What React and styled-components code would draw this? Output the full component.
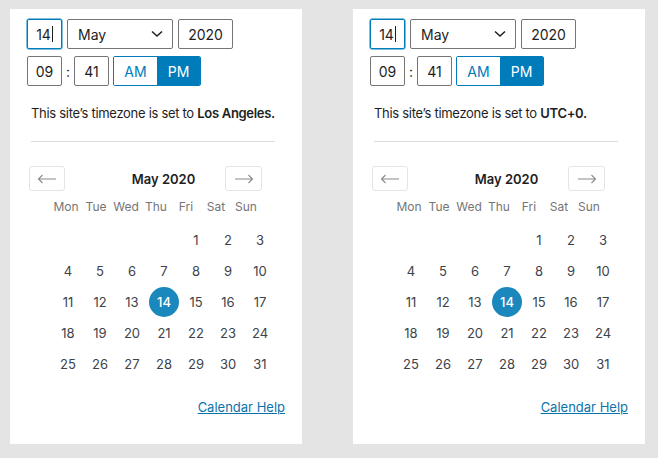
import React from "react";
import styled, { createGlobalStyle } from "styled-components";

const GlobalStyle = createGlobalStyle`
  html, body {
    margin: 0;
    padding: 0;
    background: #e4e4e4;
  }
  body {
    font-family: Inter, "Noto Sans", sans-serif;
    color: #1e1e1e;
    -webkit-font-smoothing: antialiased;
  }
`;

const Page = styled.div`
  display: flex;
  gap: 51px;
  padding: 9px 13px 0 10px;
  width: 658px;
  height: 458px;
  box-sizing: border-box;
`;

const Panel = styled.div`
  width: 292px;
  height: 435px;
  box-sizing: border-box;
  background: #fff;
  padding: 10px 17px 0 17px;
  display: flex;
  flex-direction: column;
`;

const Row = styled.div`
  display: flex;
  align-items: center;
  gap: ${(p) => p.$gap ?? 5}px;
  margin-bottom: ${(p) => p.$mb || 0}px;
`;

const Field = styled.div`
  flex: none;
  width: ${(p) => p.$w}px;
  height: 30px;
  box-sizing: border-box;
  border: 1px solid ${(p) => (p.$focus ? "#007cba" : "#757575")};
  box-shadow: ${(p) => (p.$focus ? "0 0 0 0.5px #007cba" : "none")};
  border-radius: 2px;
  display: flex;
  align-items: center;
  justify-content: ${(p) => (p.$left ? "space-between" : "center")};
  padding: ${(p) => (p.$left ? "0 9px 0 10px" : "0")};
  font-size: 14px;
  color: #1e1e1e;
`;

const Caret = styled.span`
  display: inline-block;
  width: 1px;
  height: 16px;
  background: #1e1e1e;
  margin-left: 1px;
`;

const Colon = styled.span`
  flex: none;
  font-size: 14px;
  color: #1e1e1e;
  width: 12px;
  text-align: center;
`;

const Toggle = styled.div`
  flex: none;
  display: flex;
  height: 30px;
  margin-left: 4px;
  border: 1px solid #007cba;
  border-radius: 2px;
  box-sizing: border-box;
  overflow: hidden;
`;

const ToggleBtn = styled.div`
  width: 43px;
  display: flex;
  align-items: center;
  justify-content: center;
  font-size: 14px;
  background: ${(p) => (p.$active ? "#007cba" : "#fff")};
  color: ${(p) => (p.$active ? "#fff" : "#007cba")};
`;

const Note = styled.p`
  margin: 18px 0 0 4px;
  font-size: 13px;
  line-height: 18px;
  letter-spacing: -0.3px;
  white-space: nowrap;
  color: #1e1e1e;
  b {
    font-weight: 600;
  }
`;

const Divider = styled.hr`
  border: none;
  border-top: 1px solid #dcdcde;
  margin: 19px 10px 0 4px;
`;

const Calendar = styled.div`
  margin: 24px 0 0 2px;
`;

const CalHeader = styled.div`
  display: flex;
  align-items: center;
  width: 233px;
`;

const NavBtn = styled.div`
  width: ${(p) => p.$w}px;
  height: 25px;
  box-sizing: border-box;
  border: 1px solid #e2e4e7;
  border-radius: 3px;
  display: flex;
  align-items: center;
  justify-content: center;
`;

const Title = styled.div`
  flex: 1;
  text-align: center;
  padding-left: 37px;
  font-size: 13px;
  font-weight: 600;
  color: #1e1e1e;
`;

const Weekdays = styled.div`
  display: grid;
  grid-template-columns: repeat(7, 30px);
  margin: 8px 0 0 22px;
  height: 16px;
  line-height: 16px;
  font-size: 12px;
  color: #757575;
  text-align: center;
`;

const Days = styled.div`
  display: grid;
  grid-template-columns: repeat(7, 32px);
  grid-auto-rows: 31px;
  margin: 9px 0 0 23px;
`;

const Day = styled.div`
  display: flex;
  align-items: center;
  justify-content: center;
  font-size: 13px;
  color: #3c434a;
  grid-column: ${(p) => p.$col || "auto"};
`;

const Selected = styled.span`
  width: 30px;
  height: 30px;
  border-radius: 50%;
  background: #1a87bd;
  color: #fff;
  display: flex;
  align-items: center;
  justify-content: center;
  font-weight: 500;
`;

const Help = styled.a`
  align-self: flex-end;
  margin-top: 19px;
  font-size: 13px;
  line-height: 18px;
  color: #0b73aa;
  text-decoration: underline;
`;

const Chevron = () => (
  <svg width="12" height="8" viewBox="0 0 12 8" fill="none">
    <path d="M1 1.5l5 4.5 5-4.5" stroke="#1e1e1e" strokeWidth="1.5" />
  </svg>
);

const Arrow = ({ left }) => (
  <svg width="20" height="10" viewBox="0 0 20 10" fill="none">
    {left ? (
      <path d="M19 5H1.5M5.5 1L1.5 5l4 4" stroke="#8a8a8a" strokeWidth="1.1" />
    ) : (
      <path d="M1 5h17.5M14.5 1l4 4-4 4" stroke="#8a8a8a" strokeWidth="1.1" />
    )}
  </svg>
);

const weekdays = ["Mon", "Tue", "Wed", "Thu", "Fri", "Sat", "Sun"];
const days = Array.from({ length: 31 }, (_, i) => i + 1);

const DatePanel = ({ zone }) => (
  <Panel>
    <Row $mb={7}>
      <Field $w={35} $focus>
        14
        <Caret />
      </Field>
      <Field $w={106} $left>
        May
        <Chevron />
      </Field>
      <Field $w={55}>2020</Field>
    </Row>
    <Row $gap={0}>
      <Field $w={35}>09</Field>
      <Colon>:</Colon>
      <Field $w={35}>41</Field>
      <Toggle>
        <ToggleBtn>AM</ToggleBtn>
        <ToggleBtn $active>PM</ToggleBtn>
      </Toggle>
    </Row>
    <Note>
      This site’s timezone is set to <b>{zone}.</b>
    </Note>
    <Divider />
    <Calendar>
      <CalHeader>
        <NavBtn $w={36}>
          <Arrow left />
        </NavBtn>
        <Title>May 2020</Title>
        <NavBtn $w={37}>
          <Arrow />
        </NavBtn>
      </CalHeader>
      <Weekdays>
        {weekdays.map((d) => (
          <span key={d}>{d}</span>
        ))}
      </Weekdays>
      <Days>
        {days.map((d) => (
          <Day key={d} $col={d === 1 ? 5 : undefined}>
            {d === 14 ? <Selected>14</Selected> : d}
          </Day>
        ))}
      </Days>
    </Calendar>
    <Help href="#">Calendar Help</Help>
  </Panel>
);

export default function App() {
  return (
    <>
      <GlobalStyle />
      <Page>
        <DatePanel zone="Los Angeles" />
        <DatePanel zone="UTC+0" />
      </Page>
    </>
  );
}
